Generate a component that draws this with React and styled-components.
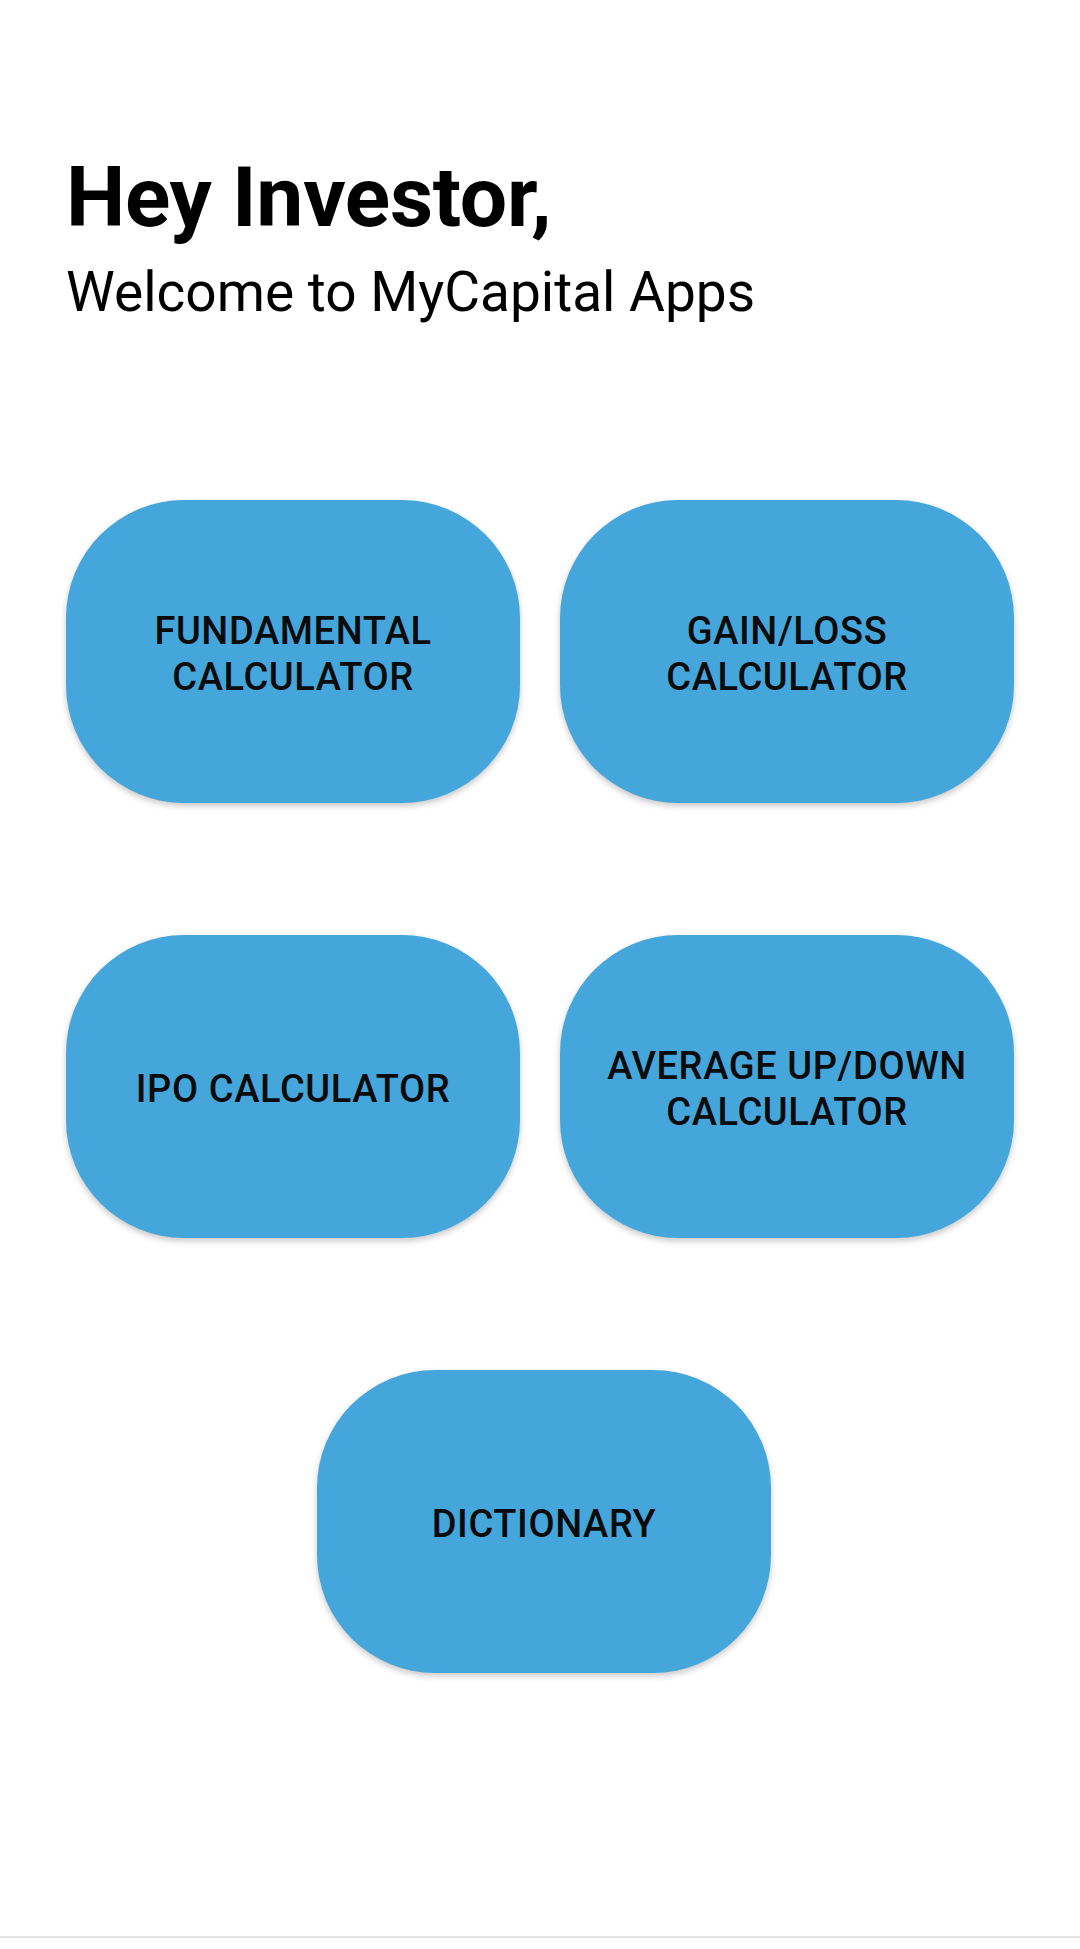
import React from "react";
import styled, { createGlobalStyle } from "styled-components";

const Global = createGlobalStyle`
  html, body { margin: 0; padding: 0; background: #ffffff; }
  body { font-family: Roboto, "Noto Sans", sans-serif; }
`;

const Page = styled.div`
  width: 1080px;
  height: 1949px;
  display: flex;
  flex-direction: column;
  box-sizing: border-box;
  background: #ffffff;
`;

const Content = styled.main`
  flex: 1;
  display: flex;
  flex-direction: column;
  padding: 149px 66px 0;
`;

const Title = styled.h1`
  margin: 0;
  font-family: Roboto, sans-serif;
  font-weight: 700;
  font-size: 84px;
  line-height: 98px;
  letter-spacing: -0.3px;
  color: #000;
`;

const Subtitle = styled.p`
  margin: 13px 0 0;
  font-family: Roboto, sans-serif;
  font-weight: 400;
  font-size: 55px;
  line-height: 64px;
  color: #000;
`;

const Grid = styled.div`
  margin-top: 176px;
  display: grid;
  grid-template-columns: 454px 454px;
  column-gap: 40px;
  row-gap: 132px;
`;

const Tile = styled.button`
  grid-column: ${(p) => (p.$wide ? "1 / span 2" : "auto")};
  justify-self: center;
  margin-left: ${(p) => (p.$wide ? "8px" : "0")};
  width: 454px;
  height: 303px;
  border: none;
  border-radius: 118px;
  background: #45a6dc;
  box-shadow: 0 3px 6px rgba(0, 0, 0, 0.22);
  display: flex;
  align-items: center;
  justify-content: center;
  padding: 5px 40px 0;
  font-family: Roboto, sans-serif;
  font-weight: 500;
  font-size: 38px;
  line-height: 46px;
  letter-spacing: 0.6px;
  color: #0b0b0b;
  text-align: center;
  text-transform: uppercase;
  cursor: pointer;
`;

const NavEdge = styled.div`
  height: 11px;
  border-top: 2px solid #e2e2e2;
  background: #ffffff;
`;

const tiles = [
  ["Fundamental", "Calculator"],
  ["Gain/Loss", "Calculator"],
  ["IPO Calculator"],
  ["Average Up/Down", "Calculator"],
];

export default function App() {
  return (
    <Page>
      <Global />
      <Content>
        <Title>Hey Investor,</Title>
        <Subtitle>Welcome to MyCapital Apps</Subtitle>
        <Grid>
          {tiles.map((lines, i) => (
            <Tile key={i}>
              <span>
                {lines.map((l, j) => (
                  <React.Fragment key={j}>
                    {j > 0 && <br />}
                    {l}
                  </React.Fragment>
                ))}
              </span>
            </Tile>
          ))}
          <Tile $wide>Dictionary</Tile>
        </Grid>
      </Content>
      <NavEdge />
    </Page>
  );
}
